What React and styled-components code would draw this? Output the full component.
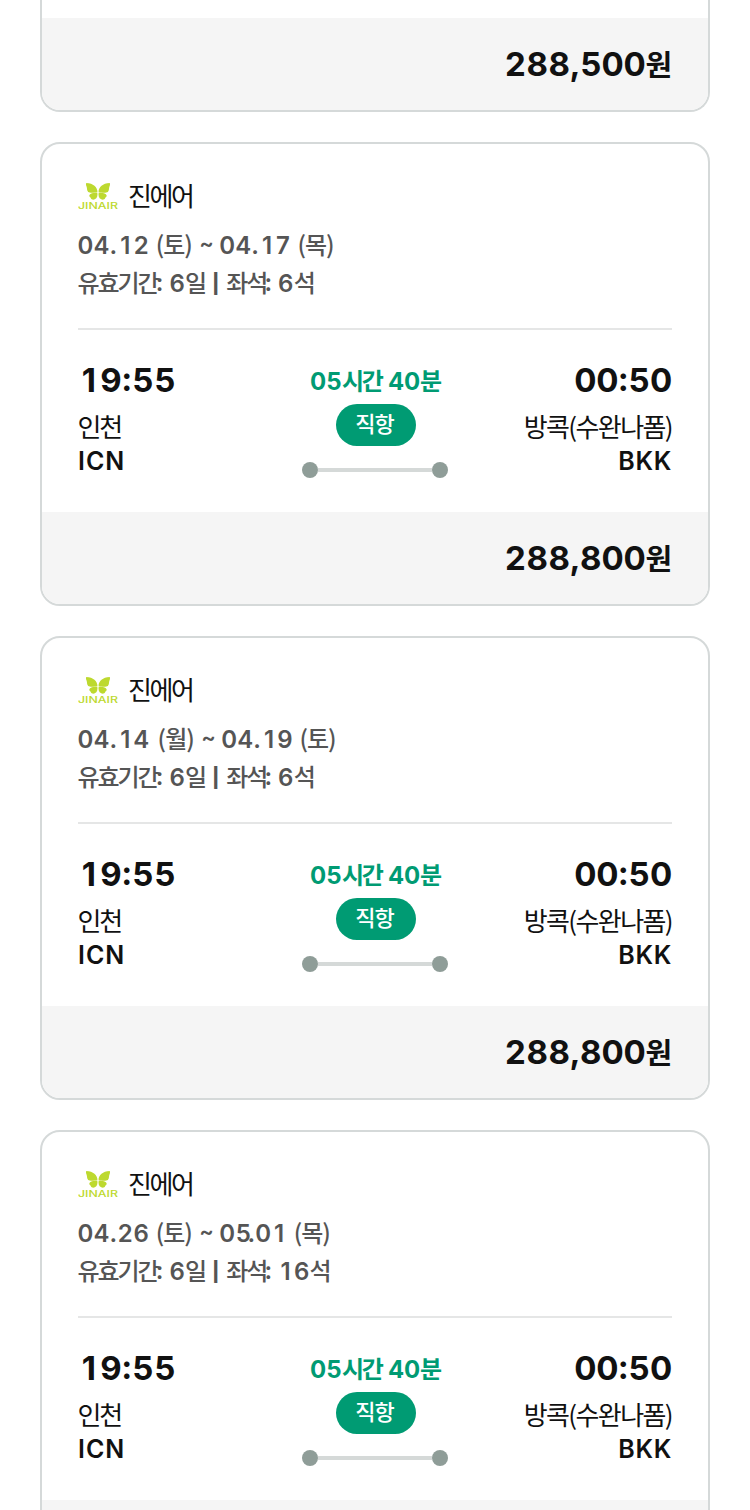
import React from "react";
import styled, { createGlobalStyle } from "styled-components";

const theme = {
  ink: "#111",
  sub: "#555",
  green: "#009b73",
  border: "#d5d9d9",
  divider: "#e5e6e6",
  footer: "#f5f5f5",
  dot: "#8f9d98",
  track: "#d5d9d8",
  logo: "#bdd92f",
};

const GlobalStyle = createGlobalStyle`
  * {
    box-sizing: border-box;
  }

  body {
    margin: 0;
    background: #fff;
    color: ${theme.ink};
    font-family: Inter, "Noto Sans CJK KR", sans-serif;
  }
`;

const Page = styled.main`
  display: flex;
  flex-direction: column;
  gap: 30px;
  width: 750px;
  height: 1510px;
  padding: 0 40px;
  overflow: hidden;
`;

const Card = styled.article`
  flex: none;
  border: 2px solid ${theme.border};
  border-top-width: ${({ $cut }) => ($cut ? 0 : "2px")};
  border-radius: ${({ $cut }) => ($cut ? "0 0 20px 20px" : "20px")};
  overflow: hidden;
`;

const CardBody = styled.div`
  height: ${({ $cut }) => ($cut ? "18px" : "368px")};
  padding: ${({ $cut }) => ($cut ? 0 : "36px 36px 0")};
`;

const Line = styled.div`
  height: ${({ $height }) => $height}px;
  padding-top: ${({ $drop }) => $drop || 0}px;
  line-height: ${({ $height }) => $height}px;
  font-size: ${({ $size }) => $size}px;
  font-weight: ${({ $weight }) => $weight || 400};
  letter-spacing: ${({ $spacing }) => $spacing || 0}px;
  color: ${({ $color }) => $color || "inherit"};
  white-space: pre;
`;

const Detail = styled(Line)`
  margin-left: -0.5px;
`;

const Hangul = styled.span`
  font-family: "Noto Sans CJK KR", sans-serif;
  font-size: ${({ $size }) => $size}px;
  font-weight: ${({ $weight }) => $weight || "inherit"};
  letter-spacing: ${({ $spacing }) => $spacing}px;
  line-height: 1;
`;

// Fixed-width slot for a digit or a punctuation mark
const Cell = styled.span`
  display: inline-flex;
  justify-content: center;
  width: ${({ $width }) => $width}em;
  margin-left: ${({ $kern }) => $kern || 0}em;
  line-height: 1;
`;

const Raised = styled(Cell)`
  transform: translateY(-1px);
`;

const Tilde = styled(Cell)`
  font-size: 0.9em;
  transform: translate(1px, -3px);
`;

const Pipe = styled(Cell)`
  font-size: 0.8em;
  font-weight: 800;
  transform: translateY(-2px);
`;

const Header = styled.header`
  display: flex;
  align-items: center;
  gap: 10px;
  height: 34px;
  margin-bottom: 12px;
`;

const Divider = styled.hr`
  height: 2px;
  margin: 26px 0 30px;
  border: 0;
  background: ${theme.divider};
`;

const Route = styled.div`
  display: grid;
  grid-template-columns: 1fr 146px 1fr;
`;

const Stop = styled.div`
  display: flex;
  flex-direction: column;
  align-items: ${({ $end }) => ($end ? "flex-end" : "flex-start")};
`;

const Time = styled(Line)`
  margin-bottom: 10px;
`;

const City = styled(Line)`
  margin-left: -0.5px;
`;

const Middle = styled.div`
  display: flex;
  flex-direction: column;
  align-items: center;
`;

const Badge = styled.span`
  display: flex;
  align-items: center;
  justify-content: center;
  width: 80px;
  height: 42px;
  margin: 2px 0 16px 2px;
  padding: 0 3px 2px 0;
  border-radius: 21px;
  background: ${theme.green};
  color: #fff;
`;

const Track = styled.div`
  display: flex;
  align-items: center;
  width: 146px;
  height: 16px;
`;

const Dot = styled.i`
  width: 16px;
  height: 16px;
  border-radius: 50%;
  background: ${theme.dot};
`;

const Bar = styled.i`
  flex: 1;
  height: 4px;
  background: ${theme.track};
`;

const Footer = styled.footer`
  display: flex;
  align-items: center;
  justify-content: flex-end;
  height: 92px;
  padding: 0 36px;
  background: ${theme.footer};
`;

// Digits sit in equal slots, Hangul runs get their own size and spacing
function Mixed({ text, size, spacing = 0, weight }) {
  const parts = text.split(/([가-힣()]+|[\d.,:~|])/).filter(Boolean);

  return parts.map((part, i) => {
    const prev = parts[i - 1] || "";

    if (/^[가-힣()]/.test(part)) {
      return (
        <Hangul key={i} $size={size} $spacing={spacing} $weight={weight}>
          {part}
        </Hangul>
      );
    }
    if (/\d/.test(part)) {
      return (
        <Cell key={i} $width={0.665}>
          {part}
        </Cell>
      );
    }
    if (part === ".") {
      return (
        <Cell key={i} $width={0.33} $kern={prev === "5" ? -0.16 : 0}>
          .
        </Cell>
      );
    }
    if (part === ",") {
      return (
        <Cell key={i} $width={0.29}>
          ,
        </Cell>
      );
    }
    if (part === ":") {
      return /\d/.test(prev) ? (
        <Raised key={i} $width={0.3}>
          :
        </Raised>
      ) : (
        <Raised key={i} $width={0.25} $kern={-0.04}>
          :
        </Raised>
      );
    }
    if (part === "~") {
      return (
        <Tilde key={i} $width={0.67}>
          ~
        </Tilde>
      );
    }
    if (part === "|") {
      return (
        <Pipe key={i} $width={0.42}>
          |
        </Pipe>
      );
    }
    return (
      <Cell key={i} $width={prev === "4" ? 0.35 : 0.27}>
        {part}
      </Cell>
    );
  });
}

function JinairLogo() {
  return (
    <svg width="40" height="28" viewBox="0 0 40 28" fill={theme.logo}>
      <path d="M19.500 8.700C19.200 4.300 15.500.2 8.200 0c-.5 1.600 0 2.800.5 4 .5 1.600 0 3.600 1.500 4.900 1.900 1.300 6.400.9 9.300-.2z" />
      <path d="M20.500 8.700C20.800 4.300 24.500.2 31.800 0c.5 1.600 0 2.800-.5 4-.5 1.600 0 3.600-1.500 4.900-1.900 1.300-6.400.9-9.300-.2z" />
      <path d="M19.300 9.500c-3.600.1-7.900.8-8 3.200 0 1.300 1.200 1.500 1.600 2.500.6 1.500 2.400 1.800 3.900 1.100 2.600-1.200 3-3.900 2.500-6.800z" />
      <path d="M20.700 9.500c3.600.1 7.900.8 8 3.200 0 1.300-1.200 1.500-1.600 2.500-.6 1.500-2.400 1.800-3.900 1.100-2.600-1.200-3-3.900-2.500-6.800z" />
      <text
        x="0"
        y="26"
        fontFamily="Inter, sans-serif"
        fontSize="8.500"
        fontWeight="500"
        textLength="40"
        lengthAdjust="spacingAndGlyphs"
      >
        JINAIR
      </text>
    </svg>
  );
}

function Price({ value }) {
  return (
    <Footer>
      {value && (
        <Line $height={40} $size={33} $weight={700}>
          <Mixed text={`${value}원`} size={29} spacing={-0.3} />
        </Line>
      )}
    </Footer>
  );
}

function FlightCard({ dates, seats, price }) {
  return (
    <Card>
      <CardBody>
        <Header>
          <JinairLogo />
          <Line $height={34} $size={26}>
            <Mixed text="진에어" size={26} spacing={-2.4} />
          </Line>
        </Header>
        <Detail $height={38} $drop={1} $size={24} $weight={600} $color={theme.sub}>
          <Mixed text={dates} size={24} spacing={-1} weight={500} />
        </Detail>
        <Detail $height={38} $drop={1} $size={24} $weight={600} $color={theme.sub}>
          <Mixed
            text={`유효기간: 6일 | 좌석: ${seats}석`}
            size={24}
            spacing={-2.05}
            weight={500}
          />
        </Detail>
        <Divider />
        <Route>
          <Stop>
            <Time $height={40} $size={33} $weight={700}>
              <Mixed text="19:55" />
            </Time>
            <City $height={34} $drop={1} $size={26}>
              <Mixed text="인천" size={26} spacing={-2.2} />
            </City>
            <Line $height={34} $size={25} $weight={600} $spacing={1}>
              ICN
            </Line>
          </Stop>
          <Middle>
            <Line $height={42} $drop={1} $size={24} $weight={700} $color={theme.green}>
              <Mixed text="05시간 40분" size={24} spacing={-2.2} />
            </Line>
            <Badge>
              <Line $height={40} $size={22}>
                <Mixed text="직항" size={22} spacing={-1} weight={500} />
              </Line>
            </Badge>
            <Track>
              <Dot />
              <Bar />
              <Dot />
            </Track>
          </Middle>
          <Stop $end>
            <Time $height={40} $size={33} $weight={700}>
              <Mixed text="00:50" />
            </Time>
            <City $height={34} $drop={1} $size={26}>
              <Mixed text="방콕(수완나폼)" size={26} spacing={-1.6} />
            </City>
            <Line $height={34} $size={25} $weight={600} $spacing={0.7}>
              BKK
            </Line>
          </Stop>
        </Route>
      </CardBody>
      <Price value={price} />
    </Card>
  );
}

const flights = [
  { id: 1, dates: "04.12 (토) ~ 04.17 (목)", seats: 6, price: "288,800" },
  { id: 2, dates: "04.14 (월) ~ 04.19 (토)", seats: 6, price: "288,800" },
  { id: 3, dates: "04.26 (토) ~ 05.01 (목)", seats: 16 },
];

function App() {
  return (
    <>
      <GlobalStyle />
      <Page>
        <Card $cut>
          <CardBody $cut />
          <Price value="288,500" />
        </Card>
        {flights.map((flight) => (
          <FlightCard key={flight.id} {...flight} />
        ))}
      </Page>
    </>
  );
}

export default App;
